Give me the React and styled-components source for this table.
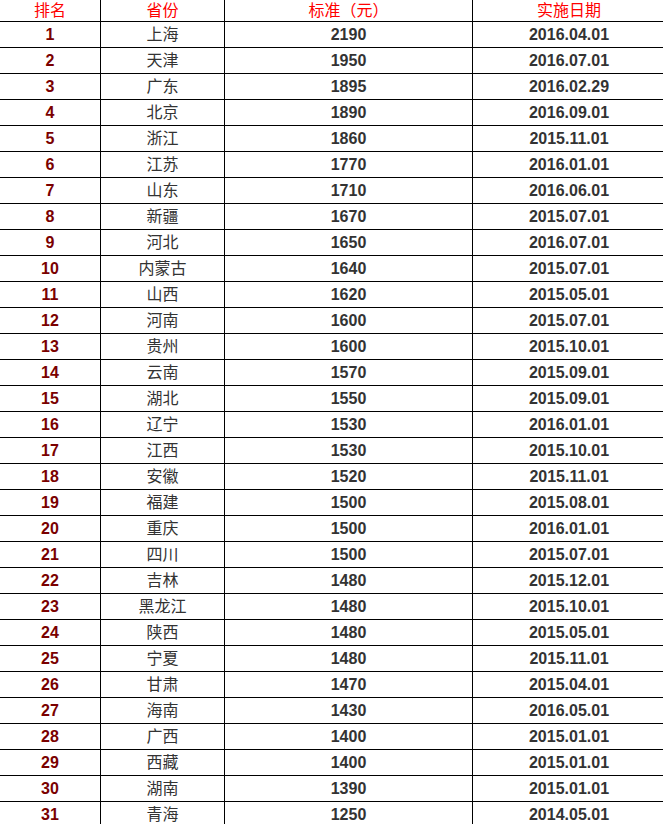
import styled, { createGlobalStyle } from "styled-components";

const GlobalStyle = createGlobalStyle`
  html, body {
    margin: 0;
    padding: 0;
    background: #fff;
  }
`;

const Page = styled.div`
  width: 663px;
  height: 824px;
  overflow: hidden;
  background: #fff;
`;

const Table = styled.table`
  border-collapse: collapse;
  table-layout: fixed;
  width: 666px;
  margin: -5px 0 0 -1px;
  font-family: "Liberation Sans", "Noto Sans CJK SC", Arial, sans-serif;
  font-size: 16px;
`;

const Cell = styled.td`
  border: 1px solid #000;
  height: 25px;
  padding: 0;
  text-align: center;
  vertical-align: middle;
  line-height: 25px;
  color: ${p => p.$tone === "rank" ? "#7a0000" : "#333"};
  font-weight: ${p => p.$bold ? "bold" : "normal"};
  white-space: nowrap;
`;

const Head = styled.th`
  border: 1px solid #000;
  height: 25px;
  padding: 0;
  text-align: center;
  vertical-align: middle;
  font-weight: normal;
  color: #ff0000;
`;

const rows = [
  ["上海", 2190, "2016.04.01"],
  ["天津", 1950, "2016.07.01"],
  ["广东", 1895, "2016.02.29"],
  ["北京", 1890, "2016.09.01"],
  ["浙江", 1860, "2015.11.01"],
  ["江苏", 1770, "2016.01.01"],
  ["山东", 1710, "2016.06.01"],
  ["新疆", 1670, "2015.07.01"],
  ["河北", 1650, "2016.07.01"],
  ["内蒙古", 1640, "2015.07.01"],
  ["山西", 1620, "2015.05.01"],
  ["河南", 1600, "2015.07.01"],
  ["贵州", 1600, "2015.10.01"],
  ["云南", 1570, "2015.09.01"],
  ["湖北", 1550, "2015.09.01"],
  ["辽宁", 1530, "2016.01.01"],
  ["江西", 1530, "2015.10.01"],
  ["安徽", 1520, "2015.11.01"],
  ["福建", 1500, "2015.08.01"],
  ["重庆", 1500, "2016.01.01"],
  ["四川", 1500, "2015.07.01"],
  ["吉林", 1480, "2015.12.01"],
  ["黑龙江", 1480, "2015.10.01"],
  ["陕西", 1480, "2015.05.01"],
  ["宁夏", 1480, "2015.11.01"],
  ["甘肃", 1470, "2015.04.01"],
  ["海南", 1430, "2016.05.01"],
  ["广西", 1400, "2015.01.01"],
  ["西藏", 1400, "2015.01.01"],
  ["湖南", 1390, "2015.01.01"],
  ["青海", 1250, "2014.05.01"],
];

export default function App() {
  return (
    <Page>
      <GlobalStyle />
      <Table>
        <colgroup>
          <col style={{ width: 101 }} />
          <col style={{ width: 124 }} />
          <col style={{ width: 248 }} />
          <col style={{ width: 193 }} />
        </colgroup>
        <thead>
          <tr>
            <Head>排名</Head>
            <Head>省份</Head>
            <Head>标准（元）</Head>
            <Head>实施日期</Head>
          </tr>
        </thead>
        <tbody>
          {rows.map(([prov, amount, date], i) => (
            <tr key={prov}>
              <Cell $tone="rank" $bold>{i + 1}</Cell>
              <Cell>{prov}</Cell>
              <Cell $bold>{amount}</Cell>
              <Cell $bold>{date}</Cell>
            </tr>
          ))}
        </tbody>
      </Table>
    </Page>
  );
}
